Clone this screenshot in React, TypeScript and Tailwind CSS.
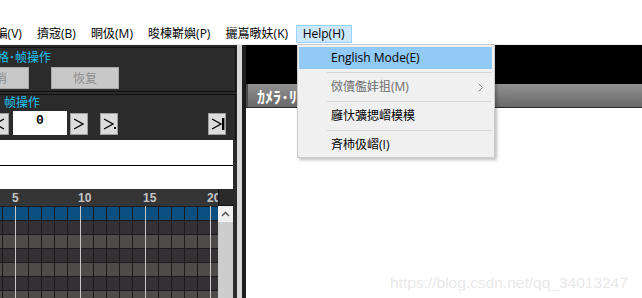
import React from "react";

const rowBg = ["bg-[#0a4f80]", "bg-[#333133]", "bg-[#4e4c4a]", "bg-[#333133]", "bg-[#4e4c4a]", "bg-[#333133]", "bg-[#4e4c4a]"];

function Arrow({ dir = "right", dot = false, bar = false }: { dir?: "left" | "right"; dot?: boolean; bar?: boolean }) {
  return (
    <svg width="14" height="12" viewBox="0 0 14 12" className="block">
      {dir === "right" ? (
        <polyline points="1,1 10,6 1,11" fill="none" stroke="#000" strokeWidth="1.3" />
      ) : (
        <polyline points="11,1 2,6 11,11" fill="none" stroke="#000" strokeWidth="1.3" />
      )}
      {dot && <rect x="11" y="9" width="2" height="2" fill="#000" />}
      {bar && <rect x="11" y="0" width="2.4" height="12" fill="#000" />}
    </svg>
  );
}

export default function App() {
  const cols = Array.from({ length: 18 });
  return (
    <div className="relative w-[642px] h-[298px] overflow-hidden bg-white font-['Open_Sans','Noto_Sans_CJK_SC',sans-serif]">
      {/* top blank */}
      <div className="h-[24px]" />
      {/* menu bar */}
      <div className="h-[20px] flex items-center text-[12px] text-black whitespace-nowrap">
        <div className="-ml-[12px] px-[6.6px] h-[18px] flex items-center border border-transparent">編(V)</div>
        <div className="px-[6.6px] h-[18px] flex items-center border border-transparent">擠宼(B)</div>
        <div className="px-[6.6px] h-[18px] flex items-center border border-transparent">晍伋(M)</div>
        <div className="px-[6.6px] h-[18px] flex items-center border border-transparent">晙楝嶄嬩(P)</div>
        <div className="px-[6.6px] h-[18px] flex items-center border border-transparent">攦嶌暾妋(K)</div>
        <div className="px-[6px] h-[18px] flex items-center border border-[#99d1ff] bg-[#cce8ff]">Help(H)</div>
      </div>
      <div className="h-[1px] bg-[#f0f0f0]" />
      {/* content */}
      <div className="flex h-[253px]">
        {/* left panel */}
        <div className="w-[237px] shrink-0 bg-[#2b2b2b] flex flex-col font-['Noto_Sans_CJK_SC',sans-serif]">
          <div className="h-[2px]" />
          {/* group box 1 */}
          <div className="h-[45px] mr-[1px] border-y border-r border-[#101010] flex flex-col">
            <div className="h-[18px] leading-[18px] text-[12px] text-[#1ec4f2] -ml-[3px] whitespace-nowrap">格･帧操作</div>
            <div className="mt-[1px] flex h-[22px]">
              <div className="-ml-[39px] w-[68px] h-[22px] bg-[#c8c8c8] border border-[#a9a9a9] text-[12px] text-[#8e8e8e] flex items-center justify-center">取消</div>
              <div className="ml-[22px] w-[68px] h-[22px] bg-[#c8c8c8] border border-[#a9a9a9] text-[12px] text-[#8e8e8e] flex items-center justify-center">恢复</div>
            </div>
          </div>
          <div className="h-[2px]" />
          {/* group box 2 */}
          <div className="h-[46px] mr-[1px] border-t border-r border-[#101010] flex flex-col">
            <div className="h-[15px] leading-[14px] text-[12px] text-[#1ec4f2] pl-[4px]">帧操作</div>
            <div className="flex items-end h-[25px]">
              <div className="-ml-[9px] w-[18px] h-[22px] bg-[#dcdcdc] border border-[#a0a0a0] flex items-center justify-center">
                <Arrow dir="left" />
              </div>
              <div className="ml-[4px] w-[54px] h-[24px] bg-white text-center font-['Liberation_Mono',monospace] font-bold text-[13px] leading-[14px] pt-[3px] text-black">0</div>
              <div className="ml-[3px] w-[18px] h-[22px] bg-[#dcdcdc] border border-[#a0a0a0] flex items-center justify-center pl-[2px]">
                <Arrow />
              </div>
              <div className="ml-[12px] w-[18px] h-[22px] bg-[#dcdcdc] border border-[#a0a0a0] flex items-center justify-center pl-[2px]">
                <Arrow dot />
              </div>
              <div className="ml-[90px] w-[18px] h-[22px] bg-[#dcdcdc] border border-[#a0a0a0] flex items-center justify-center pl-[2px]">
                <Arrow bar />
              </div>
            </div>
          </div>
          {/* white area */}
          <div className="w-[233px] h-[49px] flex flex-col">
            <div className="h-[25px] bg-white" />
            <div className="h-[1px] bg-black" />
            <div className="h-[23px] bg-white" />
          </div>
          {/* timeline */}
          <div className="flex w-[233px] h-[109px]">
            <div className="w-[218px] flex flex-col">
              <div className="relative h-[17px] bg-[#353535] font-['Liberation_Sans',sans-serif] font-bold text-[12px] text-[#c4c4c4] leading-[17px] overflow-hidden">
                <span className="absolute left-[12px] top-[1px]">5</span>
                <span className="absolute left-[78px] top-[1px]">10</span>
                <span className="absolute left-[143px] top-[1px]">15</span>
                <span className="absolute left-[207px] top-[1px]">20</span>
              </div>
              <div className="relative h-[92px] overflow-hidden">
                {rowBg.map((bg, r) => (
                  <div key={r} className="flex h-[14px] border-t border-[#1b1b1b] -ml-[11px]">
                    {cols.map((_, c) => (
                      <div key={c} className={`w-[13px] shrink-0 border-l border-[#1b1b1b] ${bg}`} />
                    ))}
                  </div>
                ))}
                <div className="absolute top-0 bottom-0 left-[15px] w-px bg-[#c8c8c8]" />
                <div className="absolute top-0 bottom-0 left-[80px] w-px bg-[#c8c8c8]" />
                <div className="absolute top-0 bottom-0 left-[145px] w-px bg-[#c8c8c8]" />
                <div className="absolute top-0 bottom-0 left-[210px] w-px bg-[#c8c8c8]" />
              </div>
            </div>
            <div className="w-[15px] flex flex-col">
              <div className="h-[17px] bg-[#2a2a2a] border-l border-b border-[#111]" />
              <div className="h-[16px] bg-[#f0f0f0] flex items-center justify-center">
                <svg width="9" height="6" viewBox="0 0 9 6">
                  <polyline points="1,5 4.5,1.5 8,5" fill="none" stroke="#606060" strokeWidth="1.6" />
                </svg>
              </div>
              <div className="flex-1 bg-[#cdcdcd]" />
            </div>
          </div>
        </div>
        {/* splitter */}
        <div className="w-[5px] shrink-0 bg-[#d9d9d9]" />
        <div className="w-[4px] shrink-0 bg-[#1e1e1e]" />
        {/* right panel */}
        <div className="flex-1 flex flex-col">
          <div className="h-[39px] bg-black" />
          <div className="h-[23px] bg-gradient-to-b from-[#929292] to-[#686868] border-l-2 border-[#4a4a4a] flex items-center pl-[9px] font-['Noto_Sans_CJK_JP',sans-serif] font-bold text-[16px] text-white whitespace-nowrap">
            ｶﾒﾗ･ﾘｽﾄ
          </div>
          <div className="h-[1px] bg-[#2a2a2a]" />
          <div className="flex-1 bg-white" />
        </div>
      </div>

      {/* watermark */}
      <div className="absolute left-[390px] top-[271px] text-[15.5px] text-[#e9e9e9] font-['Liberation_Sans',sans-serif] whitespace-nowrap">
        https://blog.csdn.net/qq_34013247
      </div>

      {/* dropdown */}
      <div className="absolute left-[297px] top-[44px] w-[198px] h-[114px] border border-[#cccccc] bg-[#f0f0f0] shadow-[2px_2px_3px_rgba(0,0,0,0.25)] pt-[2px] pl-[1px] pr-[2px] text-[12px] whitespace-nowrap">
        <div className="h-[22px] bg-[#91c9f7] pl-[32px] flex items-center text-black">English Mode(E)</div>
        <div className="h-[7px] flex items-center pl-[28px]"><div className="flex-1 h-px bg-[#d7d7d7]" /></div>
        <div className="h-[22px] pl-[32px] pr-[9px] flex items-center justify-between text-[#6d6d6d]">
          <span>傚儥儖妦抯(M)</span>
          <svg width="5" height="9" viewBox="0 0 5 9">
            <polyline points="0.5,0.5 4.5,4.5 0.5,8.5" fill="none" stroke="#8a8a8a" strokeWidth="1" />
          </svg>
        </div>
        <div className="h-[7px] flex items-center pl-[28px]"><div className="flex-1 h-px bg-[#d7d7d7]" /></div>
        <div className="h-[22px] pl-[32px] flex items-center text-black">廱忕彍揌嶍模模</div>
        <div className="h-[7px] flex items-center pl-[28px]"><div className="flex-1 h-px bg-[#d7d7d7]" /></div>
        <div className="h-[22px] pl-[32px] flex items-center text-black">斉柿伋嶍(I)</div>
      </div>
    </div>
  );
}
